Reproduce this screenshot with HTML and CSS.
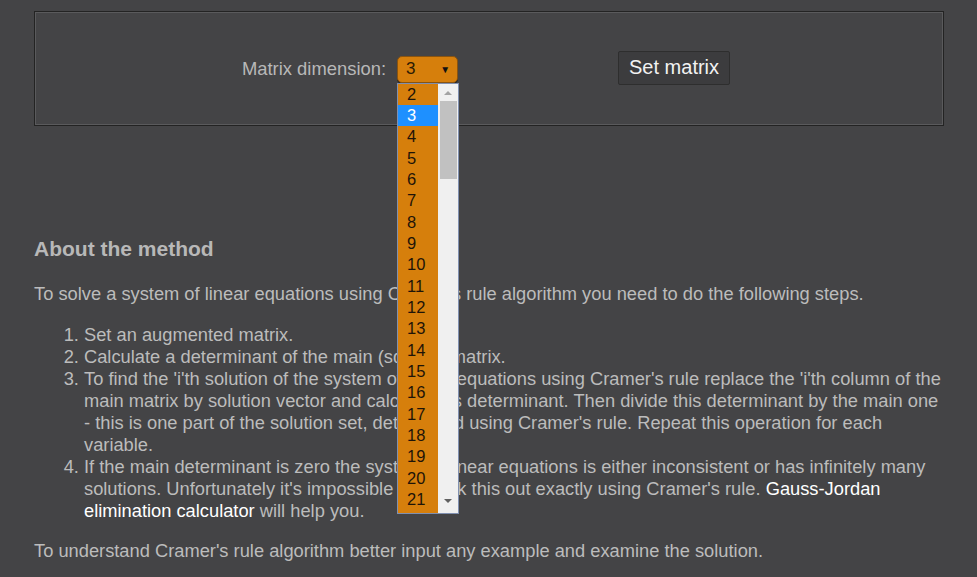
FILE: index.html
```html
<!DOCTYPE html>
<html lang="en">
<head>
  <meta charset="UTF-8">
  <title>Cramer's rule calculator</title>
  <link rel="stylesheet" href="styles.css">
</head>
<body>
  <div class="page">
    <div class="panel">
      <div class="controls">
        <span class="label">Matrix dimension:</span>
        <div class="select-wrap">
          <div class="select"><span>3</span><span class="caret">&#9660;</span></div>
          <div class="dropdown">
            <ul class="options">
              <li>2</li>
              <li class="active">3</li>
              <li>4</li>
              <li>5</li>
              <li>6</li>
              <li>7</li>
              <li>8</li>
              <li>9</li>
              <li>10</li>
              <li>11</li>
              <li>12</li>
              <li>13</li>
              <li>14</li>
              <li>15</li>
              <li>16</li>
              <li>17</li>
              <li>18</li>
              <li>19</li>
              <li>20</li>
              <li>21</li>
            </ul>
            <div class="scrollbar">
              <span class="arrow up"></span>
              <div class="track"><div class="thumb"></div></div>
              <span class="arrow down"></span>
            </div>
          </div>
        </div>
        <button class="btn">Set matrix</button>
      </div>
    </div>

    <div class="about">
      <h2>About the method</h2>
      <p>To solve a system of linear equations using Cramer's rule algorithm you need to do the following steps.</p>
      <ol>
        <li>Set an augmented matrix.</li>
        <li>Calculate a determinant of the main (square) matrix.</li>
        <li>To find the 'i'th solution of the system of linear equations using Cramer's rule replace the 'i'th column of the main matrix by solution vector and calculate its determinant. Then divide this determinant by the main one - this is one part of the solution set, determined using Cramer's rule. Repeat this operation for each variable.</li>
        <li>If the main determinant is zero the system of linear equations is either inconsistent or has infinitely many solutions. Unfortunately it's impossible to check this out exactly using Cramer's rule. <a href="#">Gauss-Jordan elimination calculator</a> will help you.</li>
      </ol>
      <p>To understand Cramer's rule algorithm better input any example and examine the solution.</p>
    </div>
  </div>
</body>
</html>
```

FILE: styles.css
```css
body {
  margin: 0;
  background: #444446;
  font-family: "Liberation Sans", Arial, sans-serif;
  color: #bcbcbc;
}

.page {
  padding: 11px 33px 0 34px;
}

.panel {
  border: 1px solid #232323;
  box-shadow: inset 0 0 0 1px #5a5a5c;
  height: 113px;
  display: flex;
  align-items: center;
  justify-content: center;
}

.controls {
  display: flex;
  align-items: center;
  margin-left: -6px;
  margin-top: 1px;
}

.label {
  font-size: 18.4px;
  color: #b8b8b8;
  margin-right: 11px;
}

.select-wrap {
  position: relative;
  margin-right: 160px;
}

.select {
  width: 59px;
  height: 25px;
  box-sizing: content-box;
  background: #d67f0c;
  border: 1px solid #8a5410;
  border-radius: 5px;
  box-shadow: 0 1px 0 #222;
  display: flex;
  align-items: center;
  justify-content: space-between;
  padding: 0;
  font-size: 17px;
  color: #2a1a05;
}

.select span:first-child {
  margin-left: 8px;
}

.caret {
  font-size: 10px;
  margin-right: 7px;
  color: #111;
}

.dropdown {
  position: absolute;
  left: 0;
  top: 27px;
  width: 60px;
  height: 429px;
  border: 1px solid #8090b0;
  background: #f0f0f0;
  display: flex;
  overflow: hidden;
}

.options {
  list-style: none;
  margin: 0;
  padding: 0;
  width: 40px;
  background: #d67f0c;
}

.options li {
  height: 21.35px;
  line-height: 21px;
  padding-left: 9px;
  font-size: 16.5px;
  color: #1e1408;
}

.options li.active {
  background: #1e90ff;
  color: #fff;
}

.scrollbar {
  width: 20px;
  display: flex;
  flex-direction: column;
  align-items: center;
  background: #f0f0f0;
}

.arrow {
  width: 0;
  height: 0;
  border-left: 4px solid transparent;
  border-right: 4px solid transparent;
  margin: 7px 0 6px;
}

.arrow.up {
  border-bottom: 4px solid #a3a3a3;
}

.arrow.down {
  border-top: 4px solid #606060;
  margin: 6px 0 10px;
}

.track {
  flex: 1;
  width: 17px;
}

.thumb {
  height: 78px;
  background: #c1c1c1;
}

.btn {
  font-family: "Liberation Sans", Arial, sans-serif;
  font-size: 20px;
  color: #f2f2f2;
  background: #3c3c3e;
  border: 1px solid #2e2e2e;
  border-radius: 2px;
  padding: 4px 10px 5px;
  margin-top: -2px;
}

.about {
  margin-top: 110px;
  font-size: 18.3px;
  line-height: 22px;
}

.about h2 {
  font-size: 21px;
  font-weight: bold;
  color: #b8b8b8;
  margin: 0 0 21px;
  line-height: 26px;
}

.about p {
  margin: 0 0 19px;
}

.about ol {
  margin: 0 0 18px;
  padding-left: 50px;
}

.about a {
  color: #fff;
  text-decoration: none;
}
```
